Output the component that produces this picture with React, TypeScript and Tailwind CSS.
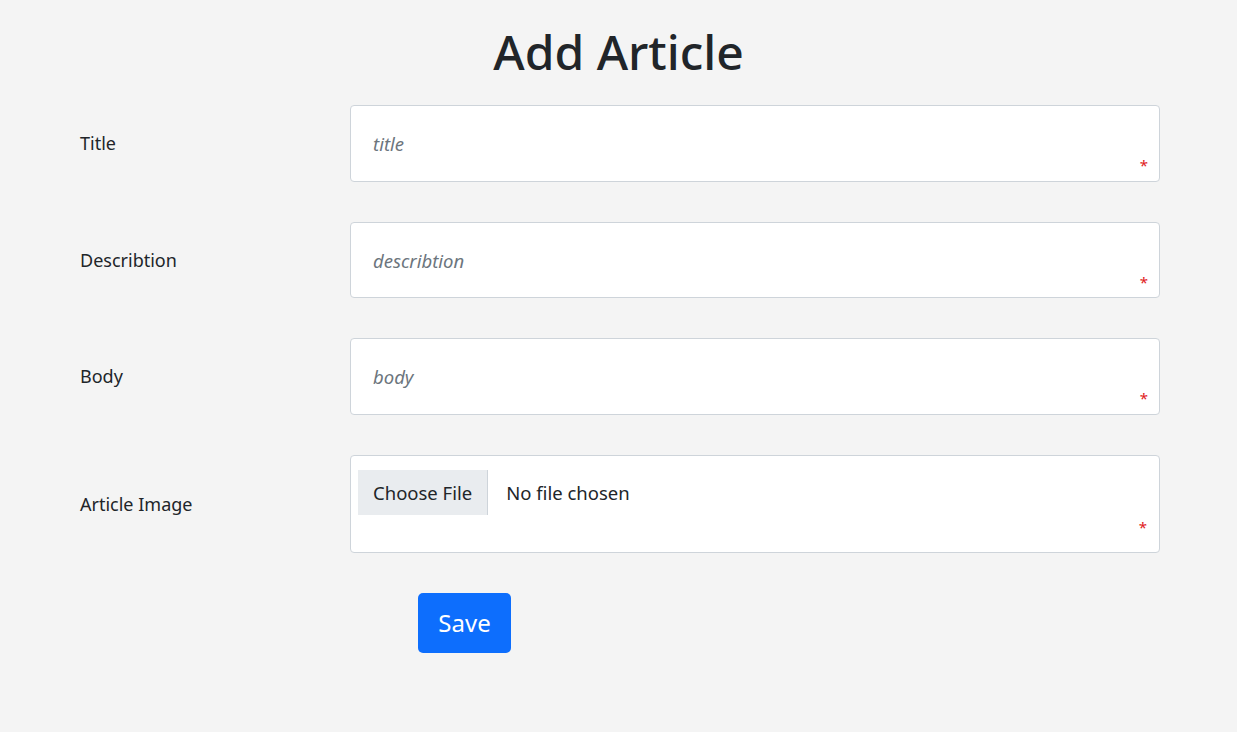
export default function App() {
  const fields = [
    { label: "Title", placeholder: "title", h: "h-[77px]" },
    { label: "Describtion", placeholder: "describtion", h: "h-[76px]" },
    { label: "Body", placeholder: "body", h: "h-[77px]" },
  ];
  return (
    <div className="min-h-screen bg-[#f4f4f4] text-[#212529] font-['Segoe_UI','Noto_Sans',sans-serif]">
      <h1 className="pt-[20px] text-center text-[48px] font-medium leading-[64px]">Add Article</h1>
      <form className="mt-[21px] pl-[80px] pr-[77px]">
        {fields.map((f) => (
          <div key={f.label} className="mb-[40px] grid grid-cols-[270px_1fr] items-center">
            <label className="text-[18px]">{f.label}</label>
            <div className="relative">
              <input
                placeholder={f.placeholder}
                className={`${f.h} w-full rounded-[4px] border border-[#ced4da] bg-white px-[22px] text-[18.5px] italic outline-none placeholder:text-[#6c757d]`}
              />
              <span className="absolute right-[12px] top-[53px] text-[15px] leading-none text-[#e0201b]">*</span>
            </div>
          </div>
        ))}
        <div className="mb-[40px] grid grid-cols-[270px_1fr] items-center">
          <label className="text-[18px]">Article Image</label>
          <div className="relative h-[98px] rounded-[4px] border border-[#ced4da] bg-white px-[7px] pt-[14px]">
            <div className="flex items-center">
              <span className="flex h-[45px] items-center border-r border-[#ced4da] bg-[#e9ecef] px-[15px] text-[18.5px]">
                Choose File
              </span>
              <span className="ml-[18px] text-[18.5px]">No file chosen</span>
            </div>
            <span className="absolute right-[12px] top-[64px] text-[15px] leading-none text-[#e0201b]">*</span>
          </div>
        </div>
        <button
          type="button"
          className="ml-[338px] h-[60px] w-[93px] rounded-[5px] bg-[#0d6efd] text-[24px] text-white"
        >
          Save
        </button>
      </form>
    </div>
  );
}
